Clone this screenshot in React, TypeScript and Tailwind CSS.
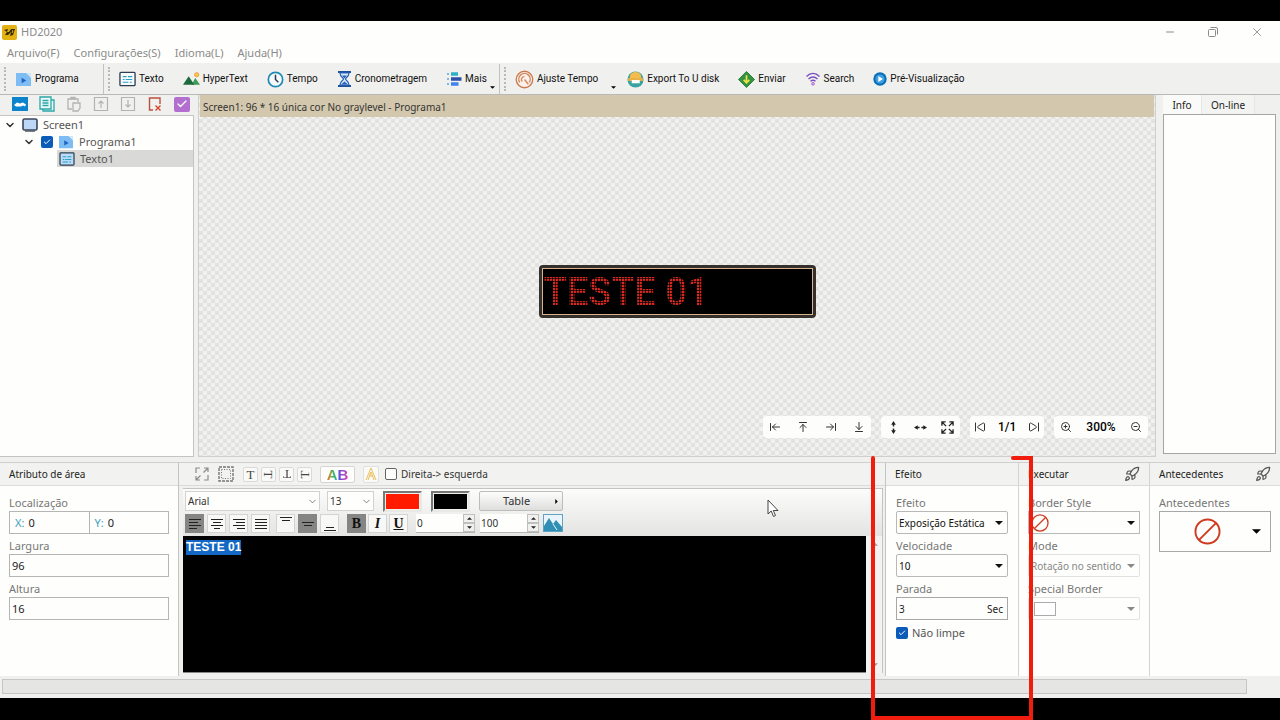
import { useEffect, useRef } from 'react';
import type { ReactNode } from 'react';
import {
  ArrowDownToLine,
  ArrowLeftToLine,
  ArrowRightToLine,
  ArrowUpToLine,
  Check,
  ChevronDown,
  Minus,
  Rocket,
  SkipBack,
  SkipForward,
  X,
  ZoomIn,
  ZoomOut,
} from 'lucide-react';

function ProgramIcon({ className }: { className: string }) {
  return (
    <svg viewBox="0 0 18 16" className={className}>
      <path d="M1 1h11l5 5v9H1z" fill="#7dbdf3" />
      <path d="M12 1h5v5z" fill="#cfe6fa" />
      <path d="M7 6l5 3-5 3z" fill="#1f62c9" />
    </svg>
  );
}

function TextIcon({ className, fill }: { className: string; fill: string }) {
  return (
    <svg viewBox="0 0 18 16" className={className}>
      <rect x="1" y="1" width="16" height="14" rx="1" fill={fill} stroke="#2c3e50" strokeWidth="1.4" />
      <path d="M4 5.500h4M9.500 5.500h4.500M4 8.500h2M7 8.500h7M4 11.500h6M11.500 11.500h2" stroke="#2a9fc4" strokeWidth="1.200" />
    </svg>
  );
}

function HyperTextIcon() {
  return (
    <svg viewBox="0 0 18 16" className="w-[17px] h-4">
      <circle cx="14.500" cy="3.500" r="2.200" fill="#f7c948" stroke="#ef9b35" />
      <path d="M9 14l4-7 5 7z" fill="#3f9a56" />
      <path d="M0 14l6-9 6 9z" fill="#1d6b3c" />
    </svg>
  );
}

function ClockIcon() {
  return (
    <svg viewBox="0 0 18 18" className="w-[17px] h-[17px]">
      <circle cx="9" cy="9" r="7.600" fill="#f5fafc" stroke="#1f8bb4" strokeWidth="1.800" />
      <path d="M9 4v5l3 3" fill="none" stroke="#2c3e50" strokeWidth="1.600" />
    </svg>
  );
}

function HourglassIcon() {
  return (
    <svg viewBox="0 0 14 16" className="w-[15px] h-4">
      <path d="M0.500 1h13M0.500 15h13" stroke="#1c4f9c" strokeWidth="1.800" />
      <path d="M2.500 2c0 4 3.500 4.500 3.500 6s-3.500 2-3.500 6h9c0-4-3.500-4.500-3.500-6s3.500-2 3.500-6z" fill="#d9ecfb" stroke="#2a63b8" strokeWidth="1.200" />
      <path d="M4.500 4.500h5L7 7.500zM3.500 13.500L7 10.500l3.500 3z" fill="#2a63b8" />
    </svg>
  );
}

function MoreIcon() {
  return (
    <svg viewBox="0 0 16 16" className="w-4 h-4">
      <path d="M1 3h2M1 8h2M1 13h2" stroke="#7fb6ea" strokeWidth="2" />
      <path d="M5 3h7" stroke="#2bb0c6" strokeWidth="3.500" />
      <path d="M5 8h10.500" stroke="#2c4fa8" strokeWidth="3.500" />
      <path d="M5 13h7.500" stroke="#3c83f0" strokeWidth="3.500" />
    </svg>
  );
}

function GaugeIcon() {
  return (
    <svg viewBox="0 0 20 20" className="w-[19px] h-[19px]">
      <circle cx="10" cy="10" r="8.700" fill="#fbf1ea" stroke="#c97a50" strokeWidth="1.400" />
      <path d="M5 13a6 6 0 1 1 10 0M7.500 12a3 3 0 0 1 2.500-5M10 10l4 5" fill="none" stroke="#d18a62" strokeWidth="1.500" />
    </svg>
  );
}

function DiskIcon() {
  return (
    <svg viewBox="0 0 18 18" className="w-[17px] h-[17px]">
      <circle cx="9" cy="9" r="8.500" fill="#39a3a0" />
      <path d="M3 10V6a6 5 0 0 1 12 0v4z" fill="#f3bd4e" />
      <path d="M1 7.500h16v3H1z" fill="#eab048" />
      <path d="M5 9.500h8.500V13H5z" fill="#fff" />
    </svg>
  );
}

function SendIcon() {
  return (
    <svg viewBox="0 0 18 18" className="w-[17px] h-[17px]">
      <path d="M9 0.500L17.500 9 9 17.500 0.500 9z" fill="#349245" stroke="#2a7d39" />
      <path d="M9 4.500v8M6 9.500l3 3 3-3" fill="none" stroke="#f1e343" strokeWidth="1.800" />
    </svg>
  );
}

function WifiIcon() {
  return (
    <svg viewBox="0 0 16 14" className="w-4 h-[14px]">
      <g fill="none" stroke="#7c4fc0" strokeWidth="1.400">
        <path d="M1.500 4.500c4-4 9-4 13 0" />
        <path d="M3.500 7c3-2.800 6-2.800 9 0" />
        <path d="M5.500 9.300c1.700-1.500 3.300-1.500 5 0" />
      </g>
      <circle cx="8" cy="11.800" r="1.400" fill="#d9a6ea" stroke="#a35fd0" strokeWidth="0.800" />
    </svg>
  );
}

function PlayIcon() {
  return (
    <svg viewBox="0 0 14 14" className="w-[14px] h-[14px]">
      <circle cx="7" cy="7" r="6.700" fill="#0b6fb8" />
      <circle cx="7" cy="7" r="4.600" fill="#3f9fe0" />
      <path d="M5.300 4l4.700 3-4.700 3z" fill="#fff" />
    </svg>
  );
}

function NoneIcon({ className }: { className: string }) {
  return (
    <svg viewBox="0 0 28 28" className={className}>
      <g fill="none" stroke="#cf3b20" strokeWidth="2">
        <circle cx="14" cy="14" r="12.500" />
        <path d="M5 23L23 5" />
      </g>
    </svg>
  );
}

function RocketIcon() {
  return <Rocket className="w-4 h-4 text-[#555]" strokeWidth={1.8} />;
}

function Caret({ className }: { className: string }) {
  return (
    <svg viewBox="0 0 8 4" className={className}>
      <path d="M0 0h8L4 4z" fill="currentColor" />
    </svg>
  );
}

function Grip() {
  return <span className="w-px h-6 border-l-2 border-dotted border-[#b9b9b9]" />;
}

function ToolButton({ icon, label, caret }: { icon: ReactNode; label: string; caret?: boolean }) {
  return (
    <button className="flex items-center gap-[3px] h-full whitespace-nowrap">
      {icon}
      {label}
      {caret && <Caret className="w-[5px] h-[3px] mt-[17px] text-black" />}
    </button>
  );
}

function Toolbar() {
  return (
    <div className="flex items-center h-8 border-b border-[#b8b8b6] bg-[#f0f0ee] pl-1 pt-px font-[Roboto,sans-serif] text-[10px] text-[#111]">
      <Grip />
      <div className="flex items-center h-full pl-[9px] w-[98px] border-r border-[#c2c2c0]">
        <ToolButton icon={<ProgramIcon className="w-[17px] h-[15px]" />} label="Programa" />
      </div>
      <div className="flex items-center gap-[19px] h-full pl-1 pr-1 border-r border-[#c2c2c0]">
        <div className="flex items-center gap-[9px] h-full">
          <Grip />
          <ToolButton icon={<TextIcon className="w-[17px] h-4" fill="#f7fbfd" />} label="Texto" />
        </div>
        <ToolButton icon={<HyperTextIcon />} label="HyperText" />
        <ToolButton icon={<ClockIcon />} label="Tempo" />
        <ToolButton icon={<HourglassIcon />} label="Cronometragem" />
        <ToolButton icon={<MoreIcon />} label="Mais" caret />
      </div>
      <div className="flex items-center gap-[19px] h-full pl-1">
        <div className="flex items-center gap-[9px] h-full">
          <Grip />
          <ToolButton icon={<GaugeIcon />} label="Ajuste Tempo" />
          <Caret className="w-[5px] h-[3px] mt-[17px] ml-1 -mr-2 text-black" />
        </div>
        <ToolButton icon={<DiskIcon />} label="Export To U disk" />
        <ToolButton icon={<SendIcon />} label="Enviar" />
        <ToolButton icon={<WifiIcon />} label="Search" />
        <ToolButton icon={<PlayIcon />} label="Pré-Visualização" />
      </div>
    </div>
  );
}

function TitleBar() {
  return (
    <header className="bg-[#fefefc] text-[#8b8b8b]">
      <div className="flex items-center h-[22px] pl-[2px] pr-4">
        <svg viewBox="0 0 15 15" className="w-[15px] h-[15px]">
          <rect width="15" height="15" rx="2" fill="#e3b112" />
          <path d="M2 5l4-1-1 3h2l2-3h4l-2 6-3 1 1-4-3 3H3l2-3z" fill="#3a2c08" />
          <path d="M10 5.500l1 0.500-1 2" stroke="#e3b112" fill="none" />
        </svg>
        <h1 className="pl-1 flex-1">HD2020</h1>
        <div className="flex items-center gap-8">
          <button aria-label="Minimize"><Minus className="w-3 h-3" strokeWidth={2} /></button>
          <button aria-label="Restore">
            <svg viewBox="0 0 10 10" className="w-[10px] h-[10px]" fill="none" stroke="currentColor">
              <rect x="0.500" y="2.500" width="7" height="7" rx="1" />
              <path d="M2.500 0.500h5.500a1.500 1.500 0 0 1 1.500 1.500v5.500" />
            </svg>
          </button>
          <button aria-label="Close"><X className="w-[14px] h-[14px]" strokeWidth={1.5} /></button>
        </div>
      </div>
      <nav className="flex items-center h-5 gap-[14px] pl-[7px]">
        <button>Arquivo(F)</button>
        <button>Configurações(S)</button>
        <button>Idioma(L)</button>
        <button>Ajuda(H)</button>
      </nav>
    </header>
  );
}

function TreeToolbar() {
  return (
    <div className="flex items-center gap-[11px] h-5 pl-3 pb-[2px] shrink-0">
      <button aria-label="Screen">
        <svg viewBox="0 0 16 14" className="w-4 h-[14px]">
          <rect width="16" height="14" fill="#0b83cd" />
          <path d="M2 8l3-2.500 3 1 3-1 3 2-1 2-2-1-2 1H4z" fill="#fff" />
        </svg>
      </button>
      <button aria-label="Copy">
        <svg viewBox="0 0 16 16" className="w-4 h-4">
          <g fill="#eefafa" stroke="#2ba6a8" strokeWidth="1.300">
            <path d="M4 4h11v11H4z" />
            <path d="M1 1h11v12H1z" />
            <path d="M3.500 4.500h6M3.500 7h6M3.500 9.500h6" />
          </g>
        </svg>
      </button>
      <button aria-label="Paste">
        <svg viewBox="0 0 16 16" className="w-4 h-4" fill="none" stroke="#b3b3b3" strokeWidth="1.300">
          <path d="M6 13H2V3h10v3M5 4V1.500h4V4" />
          <path d="M7 7h7v5l-2 3H7z" />
        </svg>
      </button>
      <button aria-label="Move up">
        <svg viewBox="0 0 16 16" className="w-4 h-4" fill="none" stroke="#b3b3b3" strokeWidth="1.200">
          <path d="M1.500 1.500h13v13h-13zM8 12V5M5.500 7.500L8 5l2.500 2.500" />
        </svg>
      </button>
      <button aria-label="Move down">
        <svg viewBox="0 0 16 16" className="w-4 h-4" fill="none" stroke="#b3b3b3" strokeWidth="1.200">
          <path d="M1.500 1.500h13v13h-13zM8 4v7M5.500 8.500L8 11l2.500-2.500" />
        </svg>
      </button>
      <button aria-label="Delete">
        <svg viewBox="0 0 16 16" className="w-4 h-4" fill="none" stroke="#b9503f" strokeWidth="1.400">
          <path d="M6 14H2.500V2H13v6" />
          <path d="M8.500 9.500l5 5M13.500 9.500l-5 5" stroke="#d8452e" />
        </svg>
      </button>
      <button aria-label="Select all" className="w-4 h-[15px] rounded-xs bg-[#b36fd0] flex items-center justify-center">
        <Check className="w-3 h-3 text-white" strokeWidth={2.5} />
      </button>
    </div>
  );
}

function Tree() {
  return (
    <aside className="w-[194px] shrink-0 flex flex-col text-[#555]">
      <TreeToolbar />
      <ul className="flex-1 bg-[#fefefc] border-y border-r border-[#c4c4c2]">
        <li className="flex items-center h-[17px] pl-1">
          <ChevronDown className="w-3 h-3 text-[#333]" strokeWidth={3} />
          <svg viewBox="0 0 16 14" className="w-4 h-[14px] ml-[6px] mr-[5px]">
            <rect x="1" y="1" width="14" height="11" rx="1.500" fill="#bcd8f6" stroke="#3c4658" strokeWidth="1.600" />
            <path d="M3 13.200h10" stroke="#3c4658" />
          </svg>
          Screen1
        </li>
        <li className="flex items-center h-[17px] pl-[23px]">
          <ChevronDown className="w-3 h-3 text-[#333]" strokeWidth={3} />
          <label className="flex items-center gap-[5px] ml-[6px]">
            <BlueCheck label="Programa1" />
            <ProgramIcon className="w-4 h-[14px]" />
            Programa1
          </label>
        </li>
        <li className="flex items-center h-[17px] ml-[57px] pl-[2px] gap-[5px] bg-[#d9d9d7]">
          <TextIcon className="w-4 h-[14px]" fill="#b9dcf8" />
          Texto1
        </li>
      </ul>
    </aside>
  );
}

function BlueCheck({ label }: { label: string }) {
  return (
    <span className="grid place-items-center w-3 h-3">
      <input
        type="checkbox"
        defaultChecked
        aria-label={label}
        className="[grid-area:1/1] appearance-none w-3 h-3 rounded-xs bg-[#0b5cb8]"
      />
      <Check className="[grid-area:1/1] w-2 h-2 text-white pointer-events-none" strokeWidth={3} />
    </span>
  );
}

function CanvasControls() {
  const group = 'flex items-center h-[22px] rounded-sm bg-[#fdfdfb] text-[#333]';
  return (
    <div className="absolute right-[7px] bottom-[18px] flex gap-[10px]">
      <div className={`${group} px-[6px] gap-4`}>
        <button aria-label="Align left"><ArrowLeftToLine className="w-3 h-3" /></button>
        <button aria-label="Align top"><ArrowUpToLine className="w-3 h-3" /></button>
        <button aria-label="Align right"><ArrowRightToLine className="w-3 h-3" /></button>
        <button aria-label="Align bottom"><ArrowDownToLine className="w-3 h-3" /></button>
      </div>
      <div className={`${group} px-[6px] gap-[14px]`}>
        <button aria-label="Fill height">
          <svg viewBox="0 0 14 14" className="w-[13px] h-[13px]">
            <path d="M7 0l2.500 4h-5zM7 14l2.500-4h-5zM6.200 4h1.600v2H6.200zM6.200 8h1.600v2H6.200z" fill="#222" />
          </svg>
        </button>
        <button aria-label="Fill width">
          <svg viewBox="0 0 14 14" className="w-[13px] h-[13px]">
            <path d="M0 7l4-2.500v5zM14 7l-4-2.500v5zM4 6.300h2v1.400H4zM8 6.300h2v1.400H8z" fill="#222" />
          </svg>
        </button>
        <button aria-label="Fill screen">
          <svg viewBox="0 0 14 14" className="w-[13px] h-[13px]">
            <path d="M1 5V1h4M9 1h4v4M13 9v4H9M5 13H1V9M1 1l4.500 4.500M13 1L8.500 5.500M13 13L8.500 8.500M1 13l4.500-4.500" fill="none" stroke="#222" strokeWidth="1.400" />
          </svg>
        </button>
      </div>
      <div className={`${group} px-1 gap-3`}>
        <button aria-label="Previous"><SkipBack className="w-3 h-3" /></button>
        <span className="w-[18px] text-center font-[Roboto,sans-serif] font-medium text-xs text-black">1/1</span>
        <button aria-label="Next"><SkipForward className="w-3 h-3" /></button>
      </div>
      <div className={`${group} px-[6px] gap-[13px]`}>
        <button aria-label="Zoom in"><ZoomIn className="w-3 h-3" /></button>
        <span className="w-8 text-center font-[Roboto,sans-serif] font-medium text-xs text-black">300%</span>
        <button aria-label="Zoom out"><ZoomOut className="w-3 h-3" /></button>
      </div>
    </div>
  );
}

function Canvas() {
  return (
    <main className="relative flex-1 flex flex-col border-x border-b border-[#cfcfcd] ml-1 bg-[repeating-conic-gradient(#f1f1ef_0_25%,#e2e2e0_0_50%)] bg-[length:8px_8px]">
      <div className="mx-px h-[22px] px-[3px] pt-px flex items-center bg-[#d3c8ae] text-[#333] text-[10px]">
        Screen1: 96 * 16 única cor No graylevel - Programa1
      </div>
      <div className="flex-1 flex items-center justify-center pt-[10px]">
        <div className="rounded-sm bg-[#35302b] p-[3px]">
          <div className="relative w-[271px] h-[47px] border border-[#d8b48e] bg-black overflow-hidden">
            <p className="pl-px font-[Roboto,sans-serif] font-medium text-[38px] leading-[47px] text-[#d52a22]">TESTE 01</p>
            {/* gaps between the LEDs */}
            <div className="absolute inset-0 bg-[repeating-linear-gradient(90deg,rgba(0,0,0,0.7)_0_1px,transparent_1px_3px),repeating-linear-gradient(rgba(0,0,0,0.7)_0_1px,transparent_1px_3px)]" />
          </div>
        </div>
      </div>
      <CanvasControls />
    </main>
  );
}

function InfoPanel() {
  return (
    <aside className="w-[124px] shrink-0 flex flex-col pl-[7px] pr-1 pb-[3px]">
      <div role="tablist" className="flex h-[19px] text-[10px] text-[#222]">
        <button role="tab" aria-selected="true" className="w-[38px] bg-[#fafaf8]">Info</button>
        <button role="tab" aria-selected="false" className="w-[54px] bg-[#f3f3f1] border-x border-[#e6e6e4]">On-line</button>
      </div>
      <div className="flex-1 border border-[#a5a5a5] bg-[#fefefc]" />
    </aside>
  );
}

function PanelHead({ children }: { children: ReactNode }) {
  return (
    <div className="flex items-center h-[23px] shrink-0 border-b border-[#dcdcda] bg-[#f2f2f0] px-[9px] text-[10px] text-[#222]">
      {children}
    </div>
  );
}

function Field({ label, children }: { label: string; children: ReactNode }) {
  return (
    <label className="block mb-1 text-[#777]">
      {label}
      <span className="block text-[#222]">{children}</span>
    </label>
  );
}

function AreaPanel() {
  const box = 'block w-full h-[23px] border border-[#b5b5b5] bg-[#fefefc] px-[2px]';
  return (
    <section className="w-[179px] shrink-0 flex flex-col border-r border-[#c4c4c2] bg-[#fefefc]">
      <PanelHead>Atributo de área</PanelHead>
      <div className="px-[9px] pt-[9px]">
        <div className="text-[#777]">Localização</div>
        <div className="flex h-[23px] mb-1 border border-[#b5b5b5] text-[#222]">
          <label className="flex-1 flex items-center gap-1 pl-[5px] border-r border-[#b5b5b5]">
            <span className="text-[#3fa0bd]">X:</span>
            <input defaultValue="0" className="w-10" />
          </label>
          <label className="flex-1 flex items-center gap-1 pl-[5px]">
            <span className="text-[#3fa0bd]">Y:</span>
            <input defaultValue="0" className="w-10" />
          </label>
        </div>
        <Field label="Largura"><input defaultValue="96" className={box} /></Field>
        <Field label="Altura"><input defaultValue="16" className={box} /></Field>
      </div>
    </section>
  );
}

function EditorHead() {
  const square = 'w-[15px] h-[15px] rounded-xs border border-[#dadad8] bg-[#fafaf8] flex items-center justify-center font-[Liberation_Serif,serif] text-[13px] leading-none text-[#444]';
  return (
    <div className="flex items-center h-[23px] border-b border-[#dcdcda] bg-[#f2f2f0] pl-4 text-[10px] text-[#333]">
      <button aria-label="Expand" className="mr-[9px]">
        <svg viewBox="0 0 14 14" className="w-[14px] h-[14px]" fill="none" stroke="#8b8b8b" strokeWidth="1.200">
          <path d="M5 1H1v5M9 13h4V8M9 1h4v4M13 1L8.500 5.500M5 13H1V9M1 13l4.500-4.500" />
        </svg>
      </button>
      <button aria-label="Fit" className="mr-[9px]">
        <svg viewBox="0 0 16 16" className="w-4 h-4" fill="none" stroke="#777">
          <rect x="1" y="1" width="14" height="14" strokeWidth="1.400" strokeDasharray="3 1" />
          <rect x="3.500" y="3.500" width="9" height="9" strokeDasharray="1 1.500" />
        </svg>
      </button>
      <div className="flex gap-[3px] mr-2">
        <button className={square}>T</button>
        <button className={square}><span className="rotate-90">T</span></button>
        <button className={square}><span className="rotate-180">T</span></button>
        <button className={square}><span className="-rotate-90">T</span></button>
      </div>
      <button className="w-[35px] h-[17px] mr-2 rounded-xs border border-[#d4d4d2] bg-[#fefefc] font-bold text-[15px] leading-none font-[Liberation_Sans,sans-serif]">
        <span className="bg-linear-to-r from-[#f2642c] via-[#38b249] to-[#3db0c0] bg-clip-text text-transparent">A</span>
        <span className="bg-linear-to-r from-[#4a45e8] to-[#e035b0] bg-clip-text text-transparent">B</span>
      </button>
      <button aria-label="Outline" className="w-4 h-[17px] mr-[6px] border border-[#e0e0de] rounded-xs bg-[#fafaf8] flex items-center justify-center">
        <svg viewBox="0 0 14 14" className="w-[14px] h-[14px]" fill="none" stroke="#e9bf58">
          <path d="M7 1L2 13M7 1l5 12M7 5l-3 8M7 5l3 8M5 9h4" />
        </svg>
      </button>
      <label className="flex items-center gap-1">
        <input type="checkbox" className="appearance-none w-3 h-3 rounded-xs border border-[#666] bg-white" />
        Direita-&gt; esquerda
      </label>
    </div>
  );
}

function FontSelect({ value, width }: { value: string; width: string }) {
  return (
    <span className={`grid items-center h-5 ${width}`}>
      <select aria-label={value} className="[grid-area:1/1] appearance-none w-full h-5 px-[2px] border border-[#d2d2d0] bg-[#fefefc] text-[10px]">
        <option>{value}</option>
      </select>
      <ChevronDown className="[grid-area:1/1] justify-self-end mr-[2px] w-[11px] h-[11px] text-[#777] pointer-events-none" strokeWidth={2} />
    </span>
  );
}

const ALIGN_LINES = [
  'M3 4.500h12M3 7.500h9M3 10.500h12M3 13.500h8',
  'M3 4.500h12M5 7.500h8M3 10.500h12M6 13.500h6',
  'M3 4.500h12M6 7.500h9M3 10.500h12M7 13.500h8',
  'M3 4.500h12M3 7.500h12M3 10.500h12M3 13.500h12',
];
const VERTICAL_LINES = ['M3 2.500h12M5 5.500h8', 'M3 7.500h12M5 10.500h8', 'M5 12.500h8M3 15.500h12'];

function LineButton({ d, active, label }: { d: string; active?: boolean; label: string }) {
  return (
    <button
      aria-label={label}
      className={`w-[19px] h-[19px] border ${active ? 'bg-[#858583] border-[#858583]' : 'bg-[#f8f8f6] border-[#d4d4d2]'}`}
    >
      <svg viewBox="0 0 17 17" className="w-full h-full" fill="none" stroke="#222">
        <path d={d} />
      </svg>
    </button>
  );
}

function Spin({ value, label }: { value: string; label: string }) {
  return (
    <div className="flex w-[59px] h-[19px] border-b border-[#b5b5b5] bg-[#fefefc] text-[10px]">
      <input aria-label={label} defaultValue={value} className="flex-1 min-w-0 pl-px" />
      <div className="flex flex-col w-3">
        <button aria-label="Up" className="flex-1 border border-[#c0c0be] bg-[#f0f0ee] flex items-center justify-center">
          <Caret className="w-[5px] h-[3px] rotate-180 text-[#222]" />
        </button>
        <button aria-label="Down" className="flex-1 border border-[#c0c0be] bg-[#f0f0ee] flex items-center justify-center">
          <Caret className="w-[5px] h-[3px] text-[#222]" />
        </button>
      </div>
    </div>
  );
}

function Editor() {
  const ref = useRef<HTMLTextAreaElement>(null);

  useEffect(() => {
    ref.current?.focus();
    ref.current?.select();
  }, []);

  const style = 'w-[19px] h-[19px] border font-[Liberation_Serif,serif] font-bold text-sm leading-none text-[#111]';
  const swatch = 'w-[39px] h-[21px] mr-[9px] border-2 border-t-[#777] border-l-[#777] border-b-[#e8e8e6] border-r-[#e8e8e6] p-px bg-[#f0f0ee]';
  return (
    <section className="flex-1 min-w-0 flex flex-col border-r border-[#c4c4c2]">
      <EditorHead />
      <div className="flex-1 flex flex-col mt-[2px] ml-1 mr-[2px] mb-[3px] border-t border-r border-[#c4c4c2] text-[#333]">
        <div className="bg-linear-to-b from-[#fcfcfa] to-[#e4e4e2] pl-[2px]">
          <div className="flex items-center h-6">
            <FontSelect value="Arial" width="w-[135px] mr-[7px]" />
            <FontSelect value="13" width="w-[47px] mr-[9px]" />
            <button aria-label="Text colour" className={swatch}><span className="block h-full bg-[#ff1a00]" /></button>
            <button aria-label="Background colour" className={swatch}><span className="block h-full bg-black" /></button>
            <button className="flex items-center justify-center gap-6 w-[84px] h-5 pl-5 rounded-xs border border-[#bdbdbb] bg-linear-to-b from-[#fdfdfb] to-[#dededc]">
              Table
              <Caret className="w-[5px] h-[3px] -rotate-90 text-black" />
            </button>
          </div>
          <div className="flex items-start h-[23px] gap-[2px] pt-px">
            <div className="flex gap-[3px] mr-1">
              {ALIGN_LINES.map((d, i) => (
                <LineButton key={d} d={d} active={i === 0} label={`Align ${i + 1}`} />
              ))}
            </div>
            <div className="flex gap-[3px] mr-[6px]">
              {VERTICAL_LINES.map((d, i) => (
                <LineButton key={d} d={d} active={i === 1} label={`Vertical ${i + 1}`} />
              ))}
            </div>
            <div className="flex gap-[2px] mr-[6px]">
              <button className={`${style} bg-[#858583] border-[#858583]`}>B</button>
              <button className={`${style} italic bg-[#f8f8f6] border-[#d4d4d2]`}>I</button>
              <button className={`${style} underline bg-[#f8f8f6] border-[#d4d4d2]`}>U</button>
            </div>
            <Spin value="0" label="Spacing" />
            <span className="w-px" />
            <Spin value="100" label="Scale" />
            <button aria-label="Insert picture" className="ml-[2px]">
              <svg viewBox="0 0 20 18" className="w-5 h-[18px]">
                <rect x="0.500" y="0.500" width="19" height="17" fill="#e9f5fa" stroke="#5ea3bf" />
                <path d="M1 17v-5l5-8 4 6 3-4 6 7v4z" fill="#2f8fb5" />
                <path d="M10 10l4 6" stroke="#e9f5fa" />
              </svg>
            </button>
          </div>
        </div>
        <div className="flex-1 flex">
          <textarea
            ref={ref}
            aria-label="Texto"
            defaultValue="TESTE 01"
            className="flex-1 resize-none outline-none bg-black pt-1 pl-[3px] font-[Liberation_Sans,sans-serif] font-bold text-xs leading-[15px] text-white selection:bg-[#1268c4] selection:text-white caret-transparent border-b border-[#888]"
          />
          <div className="w-4 flex flex-col justify-between items-center py-[6px] bg-[#f3f3f1] text-[#999]">
            <Caret className="w-[7px] h-1 rotate-180" />
            <Caret className="w-[7px] h-1" />
          </div>
        </div>
      </div>
    </section>
  );
}

function DropDown({ value, disabled, square, children }: { value: string; disabled?: boolean; square?: boolean; children?: ReactNode }) {
  return (
    <span className={`grid items-center h-[23px] ${disabled ? 'text-[#888]' : 'text-[#111]'}`}>
      <select
        disabled={disabled}
        className={`[grid-area:1/1] appearance-none w-full h-[23px] pl-[2px] border bg-[#fefefc] text-[10px] ${square ? '' : 'rounded-xs'} ${disabled ? 'border-[#e2e2e0]' : 'border-[#b8b8b6]'}`}
      >
        <option>{value}</option>
      </select>
      {children}
      <Caret className="[grid-area:1/1] justify-self-end mr-[5px] w-2 h-1 pointer-events-none" />
    </span>
  );
}

function EffectPanel() {
  return (
    <section className="w-[133px] shrink-0 flex flex-col border-r border-[#d4d4d2] bg-[#fefefc]">
      <PanelHead>Efeito</PanelHead>
      <div className="px-[10px] pt-[9px]">
        <Field label="Efeito"><DropDown value="Exposição Estática" /></Field>
        <Field label="Velocidade"><DropDown value="10" /></Field>
        <Field label="Parada">
          <span className="flex items-center h-[23px] border border-[#a8a8a8] px-[2px] text-[10px]">
            <input defaultValue="3" className="flex-1 min-w-0" />
            <span className="pr-[2px]">Sec</span>
          </span>
        </Field>
        <label className="flex items-center gap-1 pt-px text-[#555]">
          <BlueCheck label="Não limpe" />
          Não limpe
        </label>
      </div>
    </section>
  );
}

function RunPanel() {
  return (
    <section className="w-[131px] shrink-0 flex flex-col border-r border-[#d4d4d2] bg-[#fefefc]">
      <PanelHead>
        <span className="flex-1">Executar</span>
        <RocketIcon />
      </PanelHead>
      <div className="px-[9px] pt-[9px]">
        <Field label="Border Style">
          <DropDown value="" square>
            <NoneIcon className="[grid-area:1/1] w-[18px] h-[18px] ml-[3px] pointer-events-none" />
          </DropDown>
        </Field>
        <Field label="Mode"><DropDown value="Rotação no sentido" disabled /></Field>
        <Field label="Special Border">
          <DropDown value="" disabled>
            <span className="[grid-area:1/1] w-[22px] h-[14px] ml-[6px] border border-[#aaa] bg-white pointer-events-none" />
          </DropDown>
        </Field>
      </div>
    </section>
  );
}

function BackgroundPanel() {
  return (
    <section className="w-[130px] shrink-0 flex flex-col bg-[#fefefc]">
      <PanelHead>
        <span className="flex-1">Antecedentes</span>
        <RocketIcon />
      </PanelHead>
      <div className="px-[9px] pt-[9px]">
        <div className="text-[#777]">Antecedentes</div>
        <button aria-label="Antecedentes" className="flex items-center w-full h-[41px] border border-[#a8a8a8] pl-[34px] pr-[9px]">
          <NoneIcon className="w-[27px] h-[27px]" />
          <Caret className="ml-auto w-[9px] h-[5px] text-black" />
        </button>
      </div>
    </section>
  );
}

export default function App() {
  return (
    <div className="relative min-h-screen flex flex-col overflow-hidden bg-black font-[Noto_Sans,sans-serif] text-[11px] leading-4">
      <div className="h-[21px] shrink-0" />
      <TitleBar />
      <Toolbar />
      <div className="flex-1 flex bg-[#f0f0ee]">
        <Tree />
        <Canvas />
        <InfoPanel />
      </div>
      <div className="flex h-[219px] bg-[#f0f0ee] pt-[5px]">
        <div className="flex flex-1 min-w-0 border-t border-[#cfcfcd]">
          <AreaPanel />
          <Editor />
          <EffectPanel />
          <RunPanel />
          <BackgroundPanel />
        </div>
      </div>
      <div className="h-[22px] pt-[3px] pl-[2px] pr-[33px] bg-[#f0f0ee]">
        <div className="h-[15px] border border-[#c6c6c4] bg-[#e5e5e3]" />
      </div>
      <div className="h-[22px] shrink-0" />

      {/* marker around the effect settings */}
      <svg viewBox="0 0 162 264" className="absolute right-[247px] bottom-0 w-[162px] h-[264px] pointer-events-none">
        <path d="M2 2v260h158V2h-18" fill="none" stroke="#f01d0e" strokeWidth="4" strokeLinecap="round" />
      </svg>
      {/* mouse pointer */}
      <svg viewBox="0 0 12 19" className="absolute right-[501px] bottom-[202px] w-3 h-[19px] pointer-events-none">
        <path d="M1 1v14l3.200-3 2.300 5.500 2-1L6.300 11.500H11z" fill="#fff" stroke="#444" />
      </svg>
    </div>
  );
}
